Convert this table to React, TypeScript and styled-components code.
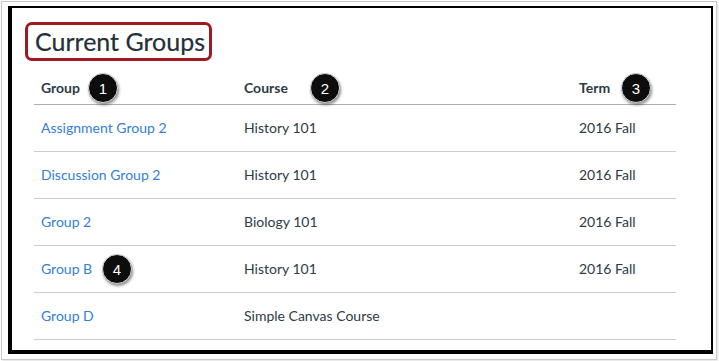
import React from "react";
import styled, { createGlobalStyle } from "styled-components";

const Global = createGlobalStyle`
  html, body { margin: 0; padding: 0; background: #ffffff; }
  body { font-family: Lato, "Open Sans", sans-serif; }
  #root { width: 719px; height: 361px; overflow: hidden; }
`;

const Frame = styled.div`
  box-sizing: border-box;
  margin: 1px 0 0 1px;
  width: 716px;
  height: 359px;
  border: 1px solid #c9c9c9;
  box-shadow: 1px 1px 2px rgba(0, 0, 0, 0.12);
  padding: 4px 3px 5px 6px;
  background: #fff;
`;

const Shot = styled.div`
  box-sizing: border-box;
  width: 100%;
  height: 100%;
  border-style: solid;
  border-color: #000;
  border-width: 2px 2px 4px 4px;
  padding: 14px 0 0 13px;
  display: flex;
  flex-direction: column;
  align-items: flex-start;
`;

const TitleBox = styled.div`
  box-sizing: border-box;
  width: 187px;
  height: 39px;
  border: 3px solid #a01820;
  border-radius: 7px;
  display: flex;
  align-items: center;
  padding-left: 7px;
  white-space: nowrap;
`;

const Title = styled.h1`
  margin: 0;
  font-family: Lato, sans-serif;
  font-weight: 400;
  font-size: 25px;
  line-height: 1;
  color: #243039;
  white-space: nowrap;
  -webkit-text-stroke: 0.2px #243039;
`;

const Table = styled.div`
  margin: 11px 0 0 9px;
  width: 642px;
  display: grid;
  grid-template-columns: 203px 335px 104px;
`;

const Cell = styled.div<{ $head?: boolean }>`
  position: relative;
  box-sizing: border-box;
  height: ${(p) => (p.$head ? "33px" : "47px")};
  display: flex;
  align-items: center;
  padding-left: 7px;
  padding-bottom: ${(p) => (p.$head ? "1px" : "2px")};
  border-bottom: 1px solid ${(p) => (p.$head ? "#a8b0b6" : "#c7cdd1")};
  font-family: Lato, sans-serif;
  font-size: 14px;
  font-weight: ${(p) => (p.$head ? 700 : 400)};
  color: #2d3b45;
  white-space: nowrap;
`;

const Link = styled.a`
  color: #3380d6;
  text-decoration: none;
`;

const Badge = styled.span<{ $left: number }>`
  position: absolute;
  left: ${(p) => p.$left}px;
  top: 50%;
  transform: translateY(-50%);
  box-sizing: border-box;
  width: 30px;
  height: 30px;
  border-radius: 50%;
  background: #0d0d0d;
  border: 1.5px solid #d6d6d6;
  box-shadow: 1px 2px 3px rgba(0, 0, 0, 0.45);
  color: #fff;
  font-family: "Liberation Sans", Arial, sans-serif;
  font-weight: 400;
  font-size: 15px;
  display: flex;
  align-items: center;
  justify-content: center;
`;

const rows = [
  { group: "Assignment Group 2", course: "History 101", term: "2016 Fall" },
  { group: "Discussion Group 2", course: "History 101", term: "2016 Fall" },
  { group: "Group 2", course: "Biology 101", term: "2016 Fall" },
  { group: "Group B", course: "History 101", term: "2016 Fall", badge: 4 },
  { group: "Group D", course: "Simple Canvas Course", term: "" },
];

export default function App() {
  return (
    <>
      <Global />
      <Frame>
        <Shot>
          <TitleBox>
            <Title>Current Groups</Title>
          </TitleBox>
          <Table>
            <Cell $head>
              Group<Badge $left={54}>1</Badge>
            </Cell>
            <Cell $head>
              Course<Badge $left={73}>2</Badge>
            </Cell>
            <Cell $head>
              Term<Badge $left={49}>3</Badge>
            </Cell>
            {rows.map((r) => (
              <React.Fragment key={r.group}>
                <Cell>
                  <Link href="#">{r.group}</Link>
                  {r.badge ? <Badge $left={68}>{r.badge}</Badge> : null}
                </Cell>
                <Cell>{r.course}</Cell>
                <Cell>{r.term}</Cell>
              </React.Fragment>
            ))}
          </Table>
        </Shot>
      </Frame>
    </>
  );
}
